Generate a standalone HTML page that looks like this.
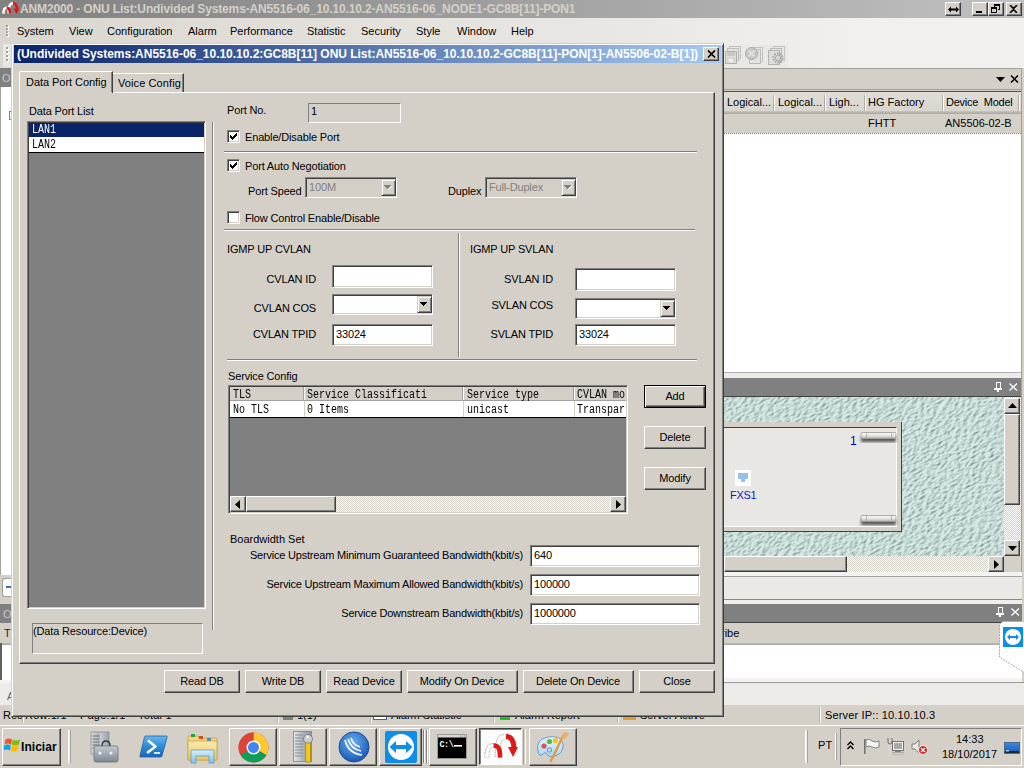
<!DOCTYPE html>
<html><head><meta charset="utf-8"><style>
html,body{margin:0;padding:0;width:1024px;height:768px;overflow:hidden;background:#d4d0c8;}
body>div,body>svg{position:absolute;box-sizing:border-box;}
body{font-family:"Liberation Sans",sans-serif;}
</style></head><body>
<div style="left:0px;top:0px;width:1024px;height:18px;background:linear-gradient(to right,#808080,#c0c0c0)"></div>
<svg style="left:2px;top:2px" width="17" height="13" viewBox="0 0 34 26"><path d="M13.5 23V17Q13.5 2.5 22 2.5Q29.5 2.5 30 14" stroke="#fff" stroke-width="5" fill="none"/><path d="M22 2.5Q29.5 2.5 30 14" stroke="#e01818" stroke-width="6" fill="none"/><path d="M23 13L35 13L29 24z" fill="#e01818"/><path d="M3 23.5V21Q3 11.5 9.5 11.5Q16 11.5 16 21V23.5" stroke="#fff" stroke-width="5" fill="none"/><path d="M9.5 11.5Q16 11.5 16 21V23.5" stroke="#d01818" stroke-width="5.5" fill="none"/></svg>
<div style="left:20px;top:2px;font:bold 12px/14px 'Liberation Sans';letter-spacing:-0.14px;color:#d4d0c8;white-space:pre;">ANM2000 - ONU List:Undivided Systems-AN5516-06_10.10.10.2-AN5516-06_NODE1-GC8B[11]-PON1</div>
<div style="left:945px;top:2px;width:16px;height:14px;background:#d4d0c8;border:1px solid;border-color:#ffffff #404040 #404040 #ffffff;box-shadow:inset -1px -1px #808080;"></div>
<div style="left:972px;top:2px;width:16px;height:14px;background:#d4d0c8;border:1px solid;border-color:#ffffff #404040 #404040 #ffffff;box-shadow:inset -1px -1px #808080;"></div>
<div style="left:988px;top:2px;width:16px;height:14px;background:#d4d0c8;border:1px solid;border-color:#ffffff #404040 #404040 #ffffff;box-shadow:inset -1px -1px #808080;"></div>
<div style="left:1006px;top:2px;width:16px;height:14px;background:#d4d0c8;border:1px solid;border-color:#ffffff #404040 #404040 #ffffff;box-shadow:inset -1px -1px #808080;"></div>
<svg style="left:948px;top:6px" width="11" height="7"><path d="M0 3.5L3 0.5V2.5H8V0.5L11 3.5L8 6.5V4.5H3V6.5z" fill="#000"/></svg>
<div style="left:976px;top:11px;width:6px;height:2px;background:#000"></div>
<svg style="left:991px;top:4px" width="10" height="10" shape-rendering="crispEdges"><path d="M3 0h6v6h-2v-1h1v-3h-4v1h-1z M0 3h6v6h-6z M1 5h4v3h-4z" fill="#000" fill-rule="evenodd"/></svg>
<svg style="left:1009px;top:5px" width="9" height="8"><path d="M1 0L4.5 3.5L8 0M1 8L4.5 4.5L8 8" stroke="#000" stroke-width="1.6" fill="none"/></svg>
<div style="left:0px;top:18px;width:1024px;height:50px;background:linear-gradient(to right,#d9d6cf 0px,#e1ded9 250px,#e9e7e3 600px,#f1f0ee 860px,#f2f1ef 1024px)"></div>
<div style="left:7px;top:26px;width:2px;height:2px;background:#fff"></div>
<div style="left:6px;top:25px;width:2px;height:2px;background:#a0a0a0"></div>
<div style="left:7px;top:29px;width:2px;height:2px;background:#fff"></div>
<div style="left:6px;top:28px;width:2px;height:2px;background:#a0a0a0"></div>
<div style="left:7px;top:32px;width:2px;height:2px;background:#fff"></div>
<div style="left:6px;top:31px;width:2px;height:2px;background:#a0a0a0"></div>
<div style="left:7px;top:35px;width:2px;height:2px;background:#fff"></div>
<div style="left:6px;top:34px;width:2px;height:2px;background:#a0a0a0"></div>
<div style="left:17px;top:25px;font:normal 11px/13px 'Liberation Sans';letter-spacing:0px;color:#000;white-space:pre;">System</div>
<div style="left:69px;top:25px;font:normal 11px/13px 'Liberation Sans';letter-spacing:0px;color:#000;white-space:pre;">View</div>
<div style="left:107px;top:25px;font:normal 11px/13px 'Liberation Sans';letter-spacing:0px;color:#000;white-space:pre;">Configuration</div>
<div style="left:188px;top:25px;font:normal 11px/13px 'Liberation Sans';letter-spacing:0px;color:#000;white-space:pre;">Alarm</div>
<div style="left:230px;top:25px;font:normal 11px/13px 'Liberation Sans';letter-spacing:0px;color:#000;white-space:pre;">Performance</div>
<div style="left:307px;top:25px;font:normal 11px/13px 'Liberation Sans';letter-spacing:0px;color:#000;white-space:pre;">Statistic</div>
<div style="left:361px;top:25px;font:normal 11px/13px 'Liberation Sans';letter-spacing:0px;color:#000;white-space:pre;">Security</div>
<div style="left:416px;top:25px;font:normal 11px/13px 'Liberation Sans';letter-spacing:0px;color:#000;white-space:pre;">Style</div>
<div style="left:457px;top:25px;font:normal 11px/13px 'Liberation Sans';letter-spacing:0px;color:#000;white-space:pre;">Window</div>
<div style="left:511px;top:25px;font:normal 11px/13px 'Liberation Sans';letter-spacing:0px;color:#000;white-space:pre;">Help</div>
<div style="left:3px;top:44px;width:9px;height:23px;background:#e9e7e3"></div>
<div style="left:7px;top:48px;width:2px;height:2px;background:#fff"></div>
<div style="left:6px;top:47px;width:2px;height:2px;background:#a0a0a0"></div>
<div style="left:7px;top:52px;width:2px;height:2px;background:#fff"></div>
<div style="left:6px;top:51px;width:2px;height:2px;background:#a0a0a0"></div>
<div style="left:7px;top:56px;width:2px;height:2px;background:#fff"></div>
<div style="left:6px;top:55px;width:2px;height:2px;background:#a0a0a0"></div>
<div style="left:7px;top:60px;width:2px;height:2px;background:#fff"></div>
<div style="left:6px;top:59px;width:2px;height:2px;background:#a0a0a0"></div>
<div style="left:724px;top:45px;width:64px;height:23px;background:#e9e8e4;border-radius:2px"></div>
<svg style="left:724px;top:46px" width="18" height="19"><rect x="5.5" y="0.5" width="11" height="12" fill="#e6e6e4" stroke="#c0c0be"/><rect x="3.5" y="2.5" width="11" height="12" fill="#e2e2e0" stroke="#bcbcba"/><rect x="1.5" y="5.5" width="11" height="12" fill="#deddd9" stroke="#b0b0ae"/><rect x="3" y="6" width="8" height="4" fill="#c8c8c6"/><rect x="4" y="12" width="6" height="5" fill="#eeeeec" stroke="#b8b8b6" stroke-width="0.6"/></svg>
<svg style="left:745px;top:46px" width="19" height="19"><rect x="6.5" y="1.5" width="11" height="14" fill="#e6e6e4" stroke="#c4c4c2"/><rect x="4.5" y="3.5" width="11" height="14" fill="#e2e2e0" stroke="#bcbcba"/><circle cx="6.5" cy="7.5" r="6" fill="#c8c8c6" stroke="#a8a8a6"/><path d="M3.5 4.5l6 6M9.5 4.5l-6 6" stroke="#e8e8e6" stroke-width="1.4"/></svg>
<svg style="left:767px;top:46px" width="19" height="19"><rect x="6.5" y="0.5" width="11" height="14" fill="#e6e6e4" stroke="#c4c4c2"/><rect x="3.5" y="2.5" width="11" height="14" fill="#e2e2e0" stroke="#bcbcba"/><rect x="1.5" y="4.5" width="11" height="14" fill="#deddd9" stroke="#b4b4b2"/><circle cx="11" cy="12" r="4.5" fill="none" stroke="#a8a8a6" stroke-width="2.2" stroke-dasharray="1.6 1.2"/><circle cx="11" cy="12" r="2.6" fill="#dcdcda" stroke="#a8a8a6"/></svg>
<div style="left:724px;top:68px;width:298px;height:1px;background:#a0a0a0"></div>
<div style="left:724px;top:69px;width:298px;height:21px;background:#d4d0c8"></div>
<svg style="left:996px;top:77px" width="9" height="5"><path d="M0 0h9l-4.5 5z" fill="#000"/></svg>
<svg style="left:1010px;top:75px" width="9" height="8"><path d="M1 0.5L8 7.5M8 0.5L1 7.5" stroke="#000" stroke-width="1.5"/></svg>
<div style="left:1021px;top:68px;width:3px;height:504px;background:#d4d0c8"></div>
<div style="left:1021px;top:68px;width:1px;height:504px;background:#a0a0a0"></div>
<div style="left:724px;top:89px;width:297px;height:1px;background:#a0a0a0"></div>
<div style="left:724px;top:91px;width:297px;height:1px;background:#505050"></div>
<div style="left:724px;top:92px;width:297px;height:21px;background:linear-gradient(#e0ddd6,#d8d5ce)"></div>
<div style="left:724px;top:111px;width:297px;height:3px;background:linear-gradient(#c8c5be,#a8a5a0)"></div>
<div style="left:774px;top:95px;width:1px;height:16px;background:#fff"></div>
<div style="left:773px;top:95px;width:1px;height:16px;background:#b0aca4"></div>
<div style="left:825px;top:95px;width:1px;height:16px;background:#fff"></div>
<div style="left:824px;top:95px;width:1px;height:16px;background:#b0aca4"></div>
<div style="left:865px;top:95px;width:1px;height:16px;background:#fff"></div>
<div style="left:864px;top:95px;width:1px;height:16px;background:#b0aca4"></div>
<div style="left:943px;top:95px;width:1px;height:16px;background:#fff"></div>
<div style="left:942px;top:95px;width:1px;height:16px;background:#b0aca4"></div>
<div style="left:1019px;top:95px;width:1px;height:16px;background:#fff"></div>
<div style="left:1018px;top:95px;width:1px;height:16px;background:#b0aca4"></div>
<div style="left:727px;top:96px;font:normal 11px/13px 'Liberation Sans';letter-spacing:0px;color:#000;white-space:pre;">Logical...</div>
<div style="left:778px;top:96px;font:normal 11px/13px 'Liberation Sans';letter-spacing:0px;color:#000;white-space:pre;">Logical...</div>
<div style="left:829px;top:96px;font:normal 11px/13px 'Liberation Sans';letter-spacing:0px;color:#000;white-space:pre;">Ligh...</div>
<div style="left:868px;top:96px;font:normal 11px/13px 'Liberation Sans';letter-spacing:0px;color:#000;white-space:pre;">HG Factory</div>
<div style="left:946px;top:96px;font:normal 11px/13px 'Liberation Sans';letter-spacing:-0.25px;color:#000;white-space:pre;">Device  Model</div>
<div style="left:724px;top:114px;width:297px;height:19px;background:#d4d0c8"></div>
<div style="left:868px;top:117px;font:normal 11px/13px 'Liberation Sans';letter-spacing:0px;color:#000;white-space:pre;">FHTT</div>
<div style="left:945px;top:117px;font:normal 11px/13px 'Liberation Sans';letter-spacing:0px;color:#000;white-space:pre;">AN5506-02-B</div>
<div style="left:724px;top:133px;width:297px;height:1px;background:repeating-linear-gradient(to right,#808080 0 1px,#fff 1px 2px)"></div>
<div style="left:724px;top:134px;width:297px;height:238px;background:#fff"></div>
<div style="left:724px;top:372px;width:297px;height:1px;background:#b0b0b0"></div>
<div style="left:724px;top:373px;width:297px;height:5px;background:#ecebe7"></div>
<div style="left:724px;top:378px;width:297px;height:19px;background:#808080;border-bottom:1px solid #404040"></div>
<svg style="left:994px;top:382px" width="8" height="10" shape-rendering="crispEdges"><path d="M2 0h4v6h-4z M0 6h8v1h-8z M3.5 7h1v3h-1z" fill="none" stroke="#fff" stroke-width="1"/></svg>
<svg style="left:1009px;top:383px" width="9" height="8"><path d="M0.5 0.5L8 7.5M8 0.5L0.5 7.5" stroke="#fff" stroke-width="1.3"/></svg>
<svg style="left:724px;top:397px" width="280" height="159"><defs><filter id="tx" x="0" y="0" width="100%" height="100%" color-interpolation-filters="sRGB"><feTurbulence type="fractalNoise" baseFrequency="0.2 0.5" numOctaves="3" seed="11" result="n"/><feDiffuseLighting in="n" surfaceScale="1.3" diffuseConstant="1.32" lighting-color="#e6fbf6" result="l"><feDistantLight azimuth="235" elevation="45"/></feDiffuseLighting></filter></defs><rect width="280" height="159" fill="#accbc5"/><g transform="rotate(-28 140 80)"><rect x="-100" y="-120" width="480" height="400" filter="url(#tx)" opacity="0.6"/></g></svg>
<div style="left:724px;top:422px;width:178px;height:110px;background:#d4d0c8;border-right:1px solid #404040;border-bottom:1px solid #404040"></div>
<div style="left:724px;top:427px;width:173px;height:100px;background:#e9e7e3;border-top:1px solid #404040;border-right:1px solid #fff;border-bottom:1px solid #fff"></div>
<div style="left:850px;top:434px;font:normal 12px/14px 'Liberation Sans';letter-spacing:0px;color:#0000b8;white-space:pre;">1</div>
<svg style="left:858px;top:431px" width="42" height="16"><defs><linearGradient id="cg432" x1="0" y1="0" x2="0" y2="1"><stop offset="0" stop-color="#f8f8f6"/><stop offset="0.5" stop-color="#e6e6e4"/><stop offset="1" stop-color="#b0b0ac"/></linearGradient><filter id="cb432"><feGaussianBlur stdDeviation="1.6"/></filter></defs><rect x="3" y="6" width="35" height="5" fill="#303030" opacity="0.8" filter="url(#cb432)"/><rect x="3" y="1.5" width="35" height="6" rx="1" fill="url(#cg432)" stroke="#9a9a98" stroke-width="0.8"/><path d="M8.5 2v5M33.5 2v5" stroke="#a8a8a4" stroke-width="0.8"/></svg>
<svg style="left:858px;top:514px" width="42" height="16"><defs><linearGradient id="cg515" x1="0" y1="0" x2="0" y2="1"><stop offset="0" stop-color="#f8f8f6"/><stop offset="0.5" stop-color="#e6e6e4"/><stop offset="1" stop-color="#b0b0ac"/></linearGradient><filter id="cb515"><feGaussianBlur stdDeviation="1.6"/></filter></defs><rect x="3" y="6" width="35" height="5" fill="#303030" opacity="0.8" filter="url(#cb515)"/><rect x="3" y="1.5" width="35" height="6" rx="1" fill="url(#cg515)" stroke="#9a9a98" stroke-width="0.8"/><path d="M8.5 2v5M33.5 2v5" stroke="#a8a8a4" stroke-width="0.8"/></svg>
<div style="left:735px;top:470px;width:16px;height:16px;background:#fff"></div>
<svg style="left:737px;top:472px" width="12" height="12"><path d="M1 1h10v6h-3v3h-4v-3h-3z" fill="#94c0ec"/></svg>
<div style="left:730px;top:489px;font:normal 11px/13px 'Liberation Sans';letter-spacing:-0.3px;color:#1020c0;white-space:pre;">FXS1</div>
<div style="left:1004px;top:397px;width:17px;height:175px;background:repeating-conic-gradient(#fff 0 25%,#d4d0c8 0 50%) 0 0/2px 2px"></div>
<div style="left:1004px;top:398px;width:16px;height:16px;background:#d4d0c8;border:1px solid;border-color:#ffffff #404040 #404040 #ffffff;box-shadow:inset -1px -1px #808080;"></div>
<svg style="left:1008px;top:403px" width="9" height="5"><path d="M4.5 0L9 5H0z" fill="#000"/></svg>
<div style="left:1004px;top:414px;width:16px;height:91px;background:#d4d0c8;border:1px solid;border-color:#ffffff #404040 #404040 #ffffff;box-shadow:inset -1px -1px #808080;"></div>
<div style="left:1004px;top:540px;width:16px;height:16px;background:#d4d0c8;border:1px solid;border-color:#ffffff #404040 #404040 #ffffff;box-shadow:inset -1px -1px #808080;"></div>
<svg style="left:1008px;top:546px" width="9" height="5"><path d="M0 0h9L4.5 5z" fill="#000"/></svg>
<div style="left:724px;top:556px;width:280px;height:16px;background:repeating-conic-gradient(#fff 0 25%,#d4d0c8 0 50%) 0 0/2px 2px"></div>
<div style="left:724px;top:556px;width:123px;height:16px;background:#d4d0c8;border:1px solid;border-color:#ffffff #404040 #404040 #ffffff;box-shadow:inset -1px -1px #808080;"></div>
<div style="left:988px;top:556px;width:16px;height:16px;background:#d4d0c8;border:1px solid;border-color:#ffffff #404040 #404040 #ffffff;box-shadow:inset -1px -1px #808080;"></div>
<svg style="left:994px;top:560px" width="5" height="9"><path d="M0 0L5 4.5L0 9z" fill="#000"/></svg>
<div style="left:1004px;top:556px;width:17px;height:16px;background:#d4d0c8"></div>
<div style="left:724px;top:572px;width:298px;height:4px;background:#f4f3f1"></div>
<div style="left:724px;top:576px;width:298px;height:1px;background:#a0a0a0"></div>
<div style="left:724px;top:577px;width:298px;height:22px;background:#ebe9e5"></div>
<div style="left:724px;top:599px;width:298px;height:1px;background:#8a8a8a"></div>
<div style="left:724px;top:600px;width:298px;height:4px;background:#f0efec"></div>
<div style="left:724px;top:604px;width:298px;height:19px;background:#808080;border-bottom:1px solid #404040"></div>
<svg style="left:996px;top:607px" width="8" height="10" shape-rendering="crispEdges"><path d="M2 0h4v6h-4z M0 6h8v1h-8z M3.5 7h1v3h-1z" fill="none" stroke="#fff" stroke-width="1"/></svg>
<svg style="left:1011px;top:608px" width="9" height="8"><path d="M0.5 0.5L8 7.5M8 0.5L0.5 7.5" stroke="#fff" stroke-width="1.3"/></svg>
<div style="left:724px;top:623px;width:298px;height:20px;background:#d4d0c8"></div>
<div style="left:724px;top:643px;width:298px;height:2px;background:linear-gradient(#c0bdb6,#a8a5a0)"></div>
<div style="left:721px;top:627px;font:normal 11px/13px 'Liberation Sans';letter-spacing:0px;color:#000;white-space:pre;">ribe</div>
<div style="left:724px;top:645px;width:298px;height:33px;background:#fff"></div>
<div style="left:724px;top:678px;width:298px;height:4px;background:#f4f3f1"></div>
<div style="left:724px;top:682px;width:300px;height:1px;background:#9a9a9a"></div>
<div style="left:724px;top:683px;width:300px;height:22px;background:#ecebe7"></div>
<svg style="left:999px;top:621px" width="25" height="54"><path d="M26 0.5H6Q0.5 0.5 0.5 6V36L26 52z" fill="#fff" stroke="#a8a8a8" stroke-width="1" stroke-dasharray="2 1"/><rect x="4" y="6" width="20" height="20" fill="#0e8ee9"/><circle cx="14" cy="16" r="8" fill="#fff"/><path d="M8 16l3-3v2h6v-2l3 3-3 3v-2h-6v2z" fill="#0e8ee9"/></svg>
<div style="left:0px;top:68px;width:11px;height:19px;background:#808080"></div>
<div style="left:2px;top:72px;font:normal 11px/13px 'Liberation Sans';letter-spacing:0px;color:#c8c8c8;white-space:pre;">O</div>
<div style="left:0px;top:87px;width:11px;height:488px;background:#fff"></div>
<div style="left:0px;top:87px;width:1px;height:488px;background:#a0a0a0"></div>
<div style="left:9px;top:111px;width:2px;height:9px;border:1px solid #808080;border-right:none"></div>
<div style="left:0px;top:575px;width:11px;height:29px;background:#d4d0c8"></div>
<div style="left:2px;top:578px;width:9px;height:19px;background:#fff;border:1px solid #a0a0a0;border-right:none;border-radius:3px 0 0 3px"></div>
<div style="left:6px;top:586px;width:5px;height:2px;background:#4070b0"></div>
<div style="left:0px;top:604px;width:11px;height:19px;background:#808080"></div>
<div style="left:3px;top:608px;font:normal 11px/13px 'Liberation Sans';letter-spacing:0px;color:#c8c8c8;white-space:pre;">O</div>
<div style="left:0px;top:623px;width:11px;height:20px;background:#d4d0c8"></div>
<div style="left:4px;top:627px;font:normal 11px/13px 'Liberation Sans';letter-spacing:0px;color:#402000;white-space:pre;">T</div>
<div style="left:0px;top:643px;width:11px;height:2px;background:linear-gradient(#c0bdb6,#a8a5a0)"></div>
<div style="left:0px;top:645px;width:11px;height:35px;background:#fff"></div>
<div style="left:0px;top:643px;width:2px;height:37px;background:#606060"></div>
<div style="left:0px;top:680px;width:11px;height:3px;background:#f4f3f1"></div>
<div style="left:0px;top:683px;width:11px;height:22px;background:#ecebe7"></div>
<div style="left:7px;top:690px;font:normal 11px/13px 'Liberation Sans';letter-spacing:0px;color:#606060;white-space:pre;">A</div>
<div style="left:0px;top:705px;width:1024px;height:20px;background:#d4d0c8"></div>
<div style="left:3px;top:709px;font:normal 11px/13px 'Liberation Sans';letter-spacing:0px;color:#000;white-space:pre;">Rec</div>
<div style="left:25px;top:709px;font:normal 11px/13px 'Liberation Sans';letter-spacing:0.2px;color:#000;white-space:pre;">Row:1/1</div>
<div style="left:80px;top:709px;font:normal 11px/13px 'Liberation Sans';letter-spacing:0.2px;color:#000;white-space:pre;">Page:1/1</div>
<div style="left:138px;top:709px;font:normal 11px/13px 'Liberation Sans';letter-spacing:0.2px;color:#000;white-space:pre;">Total 1</div>
<div style="left:22px;top:707px;width:1px;height:16px;background:#b8b4ac"></div>
<div style="left:23px;top:707px;width:1px;height:16px;background:#fff"></div>
<div style="left:277px;top:707px;width:1px;height:16px;background:#b8b4ac"></div>
<div style="left:278px;top:707px;width:1px;height:16px;background:#fff"></div>
<div style="left:370px;top:707px;width:1px;height:16px;background:#b8b4ac"></div>
<div style="left:371px;top:707px;width:1px;height:16px;background:#fff"></div>
<div style="left:493px;top:707px;width:1px;height:16px;background:#b8b4ac"></div>
<div style="left:494px;top:707px;width:1px;height:16px;background:#fff"></div>
<div style="left:617px;top:707px;width:1px;height:16px;background:#b8b4ac"></div>
<div style="left:618px;top:707px;width:1px;height:16px;background:#fff"></div>
<div style="left:819px;top:707px;width:1px;height:16px;background:#b8b4ac"></div>
<div style="left:820px;top:707px;width:1px;height:16px;background:#fff"></div>
<div style="left:297px;top:709px;font:normal 11px/13px 'Liberation Sans';letter-spacing:0px;color:#000;white-space:pre;">1(1)</div>
<div style="left:283px;top:710px;width:10px;height:10px;background:#808080"></div>
<div style="left:391px;top:709px;font:normal 11px/13px 'Liberation Sans';letter-spacing:0px;color:#000;white-space:pre;">Alarm Statistic</div>
<div style="left:373px;top:710px;width:14px;height:10px;background:#fff;border:1px solid #3060c0"></div>
<div style="left:515px;top:709px;font:normal 11px/13px 'Liberation Sans';letter-spacing:0px;color:#000;white-space:pre;">Alarm Report</div>
<div style="left:500px;top:712px;width:10px;height:8px;background:#20c020"></div>
<div style="left:640px;top:709px;font:normal 11px/13px 'Liberation Sans';letter-spacing:0px;color:#000;white-space:pre;">Server Active</div>
<div style="left:623px;top:711px;width:13px;height:9px;background:#e0a030"></div>
<div style="left:825px;top:709px;font:normal 11px/13px 'Liberation Sans';letter-spacing:0.15px;color:#000;white-space:pre;">Server IP:: 10.10.10.3</div>
<div style="left:11px;top:43px;width:713px;height:674px;background:#d4d0c8;border:1px solid;border-color:#d4d0c8 #404040 #404040 #d4d0c8;box-shadow:inset 1px 1px #ffffff,inset -1px -1px #808080"></div>
<div style="left:14px;top:45px;width:707px;height:18px;background:linear-gradient(to right,#0a246a,#a6caf0)"></div>
<div style="left:17px;top:47px;font:bold 12px/14px 'Liberation Sans';letter-spacing:-0.03px;color:#fff;white-space:pre;">(Undivided Systems:AN5516-06_10.10.10.2:GC8B[11] ONU List:AN5516-06_10.10.10.2-GC8B[11]-PON[1]-AN5506-02-B[1])</div>
<div style="left:703px;top:47px;width:16px;height:14px;background:#d4d0c8;border:1px solid;border-color:#ffffff #404040 #404040 #ffffff;box-shadow:inset -1px -1px #808080;"></div>
<svg style="left:707px;top:50px" width="9" height="8"><path d="M1 0.5L8 7.5M8 0.5L1 7.5" stroke="#000" stroke-width="1.7"/></svg>
<div style="left:19px;top:92px;width:696px;height:572px;border:1px solid;border-color:#ffffff #404040 #404040 #ffffff;box-shadow:inset -1px -1px #808080"></div>
<div style="left:113px;top:73px;width:71px;height:19px;background:#d4d0c8;border-top:1px solid #ffffff;border-right:1px solid #404040;box-shadow:inset -1px 0 #808080"></div>
<div style="left:118px;top:77px;font:normal 11px/13px 'Liberation Sans';letter-spacing:0.1px;color:#000;white-space:pre;">Voice Config</div>
<div style="left:19px;top:71px;width:94px;height:22px;background:#d4d0c8;border-top:1px solid #ffffff;border-left:1px solid #ffffff;border-right:1px solid #404040;box-shadow:inset -1px 0 #808080;border-top-left-radius:2px"></div>
<div style="left:20px;top:92px;width:92px;height:2px;background:#d4d0c8"></div>
<div style="left:26px;top:76px;font:normal 11px/13px 'Liberation Sans';letter-spacing:-0.05px;color:#000;white-space:pre;">Data Port Config</div>
<div style="left:29px;top:105px;font:normal 11px/13px 'Liberation Sans';letter-spacing:-0.15px;color:#000;white-space:pre;">Data Port List</div>
<div style="left:27px;top:121px;width:179px;height:488px;background:#808080;border:1px solid;border-color:#808080 #ffffff #ffffff #808080;box-shadow:inset 1px 1px #404040,inset -1px -1px #d4d0c8;"></div>
<div style="left:29px;top:123px;width:175px;height:14px;background:#0a246a"></div>
<div style="left:32px;top:123px;font:normal 12px/14px 'Liberation Mono';letter-spacing:0px;color:#fff;white-space:pre;transform:scaleX(0.833);transform-origin:0 0">LAN1</div>
<div style="left:29px;top:137px;width:175px;height:16px;background:#fff;border-bottom:1px solid #000"></div>
<div style="left:32px;top:138px;font:normal 12px/14px 'Liberation Mono';letter-spacing:0px;color:#000;white-space:pre;transform:scaleX(0.833);transform-origin:0 0">LAN2</div>
<div style="left:212px;top:122px;width:1px;height:508px;background:#808080"></div>
<div style="left:213px;top:122px;width:1px;height:508px;background:#ffffff"></div>
<div style="left:32px;top:623px;width:171px;height:31px;background:#d4d0c8;border:1px solid;border-color:#808080 #ffffff #ffffff #808080"></div>
<div style="left:33px;top:625px;font:normal 11px/13px 'Liberation Sans';letter-spacing:-0.15px;color:#000;white-space:pre;">(Data Resource:Device)</div>
<div style="left:227px;top:104px;font:normal 11px/13px 'Liberation Sans';letter-spacing:-0.15px;color:#000;white-space:pre;">Port No.</div>
<div style="left:308px;top:103px;width:93px;height:20px;background:#d4d0c8;border:1px solid;border-color:#808080 #ffffff #ffffff #808080"></div>
<div style="left:311px;top:105px;font:normal 11px/13px 'Liberation Sans';letter-spacing:-0.15px;color:#000;white-space:pre;">1</div>
<div style="left:227px;top:130px;width:13px;height:13px;background:#fff;border:1px solid;border-color:#808080 #ffffff #ffffff #808080;box-shadow:inset 1px 1px #404040,inset -1px -1px #d4d0c8;"></div>
<svg style="left:230px;top:133px" width="7" height="7" viewBox="0 0 7 7"><path d="M0 2h1v1h1v1h1v-1h1v-1h1v-1h1v-1h1v3h-1v1h-1v1h-1v1h-1v1h-1v-1h-1v-1h-1v-1h-1z" fill="#000"/></svg>
<div style="left:245px;top:131px;font:normal 11px/13px 'Liberation Sans';letter-spacing:-0.15px;color:#000;white-space:pre;">Enable/Disable Port</div>
<div style="left:224px;top:151px;width:473px;height:1px;background:#808080"></div>
<div style="left:224px;top:152px;width:473px;height:1px;background:#ffffff"></div>
<div style="left:227px;top:159px;width:13px;height:13px;background:#fff;border:1px solid;border-color:#808080 #ffffff #ffffff #808080;box-shadow:inset 1px 1px #404040,inset -1px -1px #d4d0c8;"></div>
<svg style="left:230px;top:162px" width="7" height="7" viewBox="0 0 7 7"><path d="M0 2h1v1h1v1h1v-1h1v-1h1v-1h1v-1h1v3h-1v1h-1v1h-1v1h-1v1h-1v-1h-1v-1h-1v-1h-1z" fill="#000"/></svg>
<div style="left:245px;top:160px;font:normal 11px/13px 'Liberation Sans';letter-spacing:-0.15px;color:#000;white-space:pre;">Port Auto Negotiation</div>
<div style="left:248px;top:185px;font:normal 11px/13px 'Liberation Sans';letter-spacing:-0.15px;color:#000;white-space:pre;">Port Speed</div>
<div style="left:305px;top:177px;width:92px;height:21px;background:#d4d0c8;border:1px solid;border-color:#808080 #ffffff #ffffff #808080;box-shadow:inset 1px 1px #404040,inset -1px -1px #d4d0c8;"></div>
<div style="left:381px;top:179px;width:15px;height:17px;background:#d4d0c8;border:1px solid;border-color:#d4d0c8 #404040 #404040 #d4d0c8;box-shadow:inset 1px 1px #ffffff,inset -1px -1px #808080"></div>
<svg style="left:384px;top:185px" width="9" height="6" shape-rendering="crispEdges"><path d="M0 0h7v1h-1v1h-1v1h-1v1h-1v-1h-1v-1h-1v-1h-1z" fill="#808080"/><path d="M4 4h1v-1h1v-1h1v-1h1v1h-1v1h-1v1h-1v1h-1z" fill="#fff"/></svg>
<div style="left:309px;top:181px;font:normal 11px/13px 'Liberation Sans';letter-spacing:-0.15px;color:#808080;white-space:pre;">100M</div>
<div style="left:448px;top:185px;font:normal 11px/13px 'Liberation Sans';letter-spacing:-0.15px;color:#000;white-space:pre;">Duplex</div>
<div style="left:485px;top:177px;width:92px;height:21px;background:#d4d0c8;border:1px solid;border-color:#808080 #ffffff #ffffff #808080;box-shadow:inset 1px 1px #404040,inset -1px -1px #d4d0c8;"></div>
<div style="left:561px;top:179px;width:15px;height:17px;background:#d4d0c8;border:1px solid;border-color:#d4d0c8 #404040 #404040 #d4d0c8;box-shadow:inset 1px 1px #ffffff,inset -1px -1px #808080"></div>
<svg style="left:564px;top:185px" width="9" height="6" shape-rendering="crispEdges"><path d="M0 0h7v1h-1v1h-1v1h-1v1h-1v-1h-1v-1h-1v-1h-1z" fill="#808080"/><path d="M4 4h1v-1h1v-1h1v-1h1v1h-1v1h-1v1h-1v1h-1z" fill="#fff"/></svg>
<div style="left:489px;top:181px;font:normal 11px/13px 'Liberation Sans';letter-spacing:-0.15px;color:#808080;white-space:pre;">Full-Duplex</div>
<div style="left:227px;top:211px;width:13px;height:13px;background:#fff;border:1px solid;border-color:#808080 #ffffff #ffffff #808080;box-shadow:inset 1px 1px #404040,inset -1px -1px #d4d0c8;"></div>
<div style="left:245px;top:212px;font:normal 11px/13px 'Liberation Sans';letter-spacing:-0.15px;color:#000;white-space:pre;">Flow Control Enable/Disable</div>
<div style="left:224px;top:229px;width:471px;height:1px;background:#808080"></div>
<div style="left:224px;top:230px;width:471px;height:1px;background:#ffffff"></div>
<div style="left:227px;top:243px;font:normal 11px/13px 'Liberation Sans';letter-spacing:-0.15px;color:#000;white-space:pre;">IGMP UP CVLAN</div>
<div style="left:458px;top:233px;width:1px;height:124px;background:#808080"></div>
<div style="left:459px;top:233px;width:1px;height:124px;background:#ffffff"></div>
<div style="left:470px;top:243px;font:normal 11px/13px 'Liberation Sans';letter-spacing:-0.15px;color:#000;white-space:pre;">IGMP UP SVLAN</div>
<div style="right:708px;top:273px;font:normal 11px/13px 'Liberation Sans';letter-spacing:-0.15px;color:#000;white-space:pre;">CVLAN ID</div>
<div style="left:332px;top:265px;width:101px;height:23px;background:#fff;border:1px solid;border-color:#808080 #ffffff #ffffff #808080;box-shadow:inset 1px 1px #404040,inset -1px -1px #d4d0c8;"></div>
<div style="right:708px;top:302px;font:normal 11px/13px 'Liberation Sans';letter-spacing:-0.15px;color:#000;white-space:pre;">CVLAN COS</div>
<div style="left:332px;top:294px;width:101px;height:21px;background:#fff;border:1px solid;border-color:#808080 #ffffff #ffffff #808080;box-shadow:inset 1px 1px #404040,inset -1px -1px #d4d0c8;"></div>
<div style="left:417px;top:296px;width:15px;height:17px;background:#d4d0c8;border:1px solid;border-color:#d4d0c8 #404040 #404040 #d4d0c8;box-shadow:inset 1px 1px #ffffff,inset -1px -1px #808080"></div>
<svg style="left:420px;top:302px" width="8" height="5" shape-rendering="crispEdges"><path d="M0 0h7v1h-1v1h-1v1h-1v1h-1v-1h-1v-1h-1v-1h-1z" fill="#000"/></svg>
<div style="right:708px;top:328px;font:normal 11px/13px 'Liberation Sans';letter-spacing:-0.15px;color:#000;white-space:pre;">CVLAN TPID</div>
<div style="left:332px;top:324px;width:101px;height:22px;background:#fff;border:1px solid;border-color:#808080 #ffffff #ffffff #808080;box-shadow:inset 1px 1px #404040,inset -1px -1px #d4d0c8;"></div>
<div style="left:336px;top:328px;font:normal 11px/13px 'Liberation Sans';letter-spacing:-0.15px;color:#000;white-space:pre;">33024</div>
<div style="right:471px;top:273px;font:normal 11px/13px 'Liberation Sans';letter-spacing:-0.15px;color:#000;white-space:pre;">SVLAN ID</div>
<div style="left:575px;top:268px;width:101px;height:23px;background:#fff;border:1px solid;border-color:#808080 #ffffff #ffffff #808080;box-shadow:inset 1px 1px #404040,inset -1px -1px #d4d0c8;"></div>
<div style="right:471px;top:299px;font:normal 11px/13px 'Liberation Sans';letter-spacing:-0.15px;color:#000;white-space:pre;">SVLAN COS</div>
<div style="left:575px;top:298px;width:101px;height:21px;background:#fff;border:1px solid;border-color:#808080 #ffffff #ffffff #808080;box-shadow:inset 1px 1px #404040,inset -1px -1px #d4d0c8;"></div>
<div style="left:660px;top:300px;width:15px;height:17px;background:#d4d0c8;border:1px solid;border-color:#d4d0c8 #404040 #404040 #d4d0c8;box-shadow:inset 1px 1px #ffffff,inset -1px -1px #808080"></div>
<svg style="left:663px;top:306px" width="8" height="5" shape-rendering="crispEdges"><path d="M0 0h7v1h-1v1h-1v1h-1v1h-1v-1h-1v-1h-1v-1h-1z" fill="#000"/></svg>
<div style="right:471px;top:328px;font:normal 11px/13px 'Liberation Sans';letter-spacing:-0.15px;color:#000;white-space:pre;">SVLAN TPID</div>
<div style="left:575px;top:324px;width:101px;height:22px;background:#fff;border:1px solid;border-color:#808080 #ffffff #ffffff #808080;box-shadow:inset 1px 1px #404040,inset -1px -1px #d4d0c8;"></div>
<div style="left:579px;top:328px;font:normal 11px/13px 'Liberation Sans';letter-spacing:-0.15px;color:#000;white-space:pre;">33024</div>
<div style="left:227px;top:359px;width:470px;height:1px;background:#808080"></div>
<div style="left:227px;top:360px;width:470px;height:1px;background:#ffffff"></div>
<div style="left:228px;top:370px;font:normal 11px/13px 'Liberation Sans';letter-spacing:-0.15px;color:#000;white-space:pre;">Service Config</div>
<div style="left:228px;top:385px;width:400px;height:129px;background:#808080;border:1px solid;border-color:#808080 #ffffff #ffffff #808080;box-shadow:inset 1px 1px #404040,inset -1px -1px #d4d0c8;"></div>
<div style="left:230px;top:387px;width:396px;height:14px;background:#d4d0c8"></div>
<div style="left:230px;top:401px;width:396px;height:17px;background:#fff;border-bottom:1px solid #000"></div>
<div style="left:304px;top:387px;width:1px;height:14px;background:#fff"></div>
<div style="left:303px;top:387px;width:1px;height:14px;background:#a0a0a0"></div>
<div style="left:304px;top:401px;width:1px;height:16px;background:#d4d0c8"></div>
<div style="left:463px;top:387px;width:1px;height:14px;background:#fff"></div>
<div style="left:462px;top:387px;width:1px;height:14px;background:#a0a0a0"></div>
<div style="left:463px;top:401px;width:1px;height:16px;background:#d4d0c8"></div>
<div style="left:574px;top:387px;width:1px;height:14px;background:#fff"></div>
<div style="left:573px;top:387px;width:1px;height:14px;background:#a0a0a0"></div>
<div style="left:574px;top:401px;width:1px;height:16px;background:#d4d0c8"></div>
<div style="left:230px;top:400px;width:396px;height:1px;background:#a0a0a0"></div>
<div style="left:233px;top:388px;font:normal 12px/14px 'Liberation Mono';letter-spacing:0px;color:#000;white-space:pre;transform:scaleX(0.833);transform-origin:0 0">TLS</div>
<div style="left:307px;top:388px;font:normal 12px/14px 'Liberation Mono';letter-spacing:0px;color:#000;white-space:pre;transform:scaleX(0.833);transform-origin:0 0">Service Classificati</div>
<div style="left:467px;top:388px;font:normal 12px/14px 'Liberation Mono';letter-spacing:0px;color:#000;white-space:pre;transform:scaleX(0.833);transform-origin:0 0">Service type</div>
<div style="left:577px;top:388px;font:normal 12px/14px 'Liberation Mono';letter-spacing:0px;color:#000;white-space:pre;transform:scaleX(0.833);transform-origin:0 0">CVLAN mo</div>
<div style="left:233px;top:403px;font:normal 12px/14px 'Liberation Mono';letter-spacing:0px;color:#000;white-space:pre;transform:scaleX(0.833);transform-origin:0 0">No TLS</div>
<div style="left:307px;top:403px;font:normal 12px/14px 'Liberation Mono';letter-spacing:0px;color:#000;white-space:pre;transform:scaleX(0.833);transform-origin:0 0">0 Items</div>
<div style="left:467px;top:403px;font:normal 12px/14px 'Liberation Mono';letter-spacing:0px;color:#000;white-space:pre;transform:scaleX(0.833);transform-origin:0 0">unicast</div>
<div style="left:577px;top:403px;font:normal 12px/14px 'Liberation Mono';letter-spacing:0px;color:#000;white-space:pre;transform:scaleX(0.833);transform-origin:0 0">Transpar</div>
<div style="left:230px;top:496px;width:396px;height:16px;background:repeating-conic-gradient(#fff 0 25%,#d4d0c8 0 50%) 0 0/2px 2px"></div>
<div style="left:230px;top:496px;width:16px;height:16px;background:#d4d0c8;border:1px solid;border-color:#ffffff #404040 #404040 #ffffff;box-shadow:inset -1px -1px #808080;"></div>
<svg style="left:235px;top:500px" width="5" height="9"><path d="M5 0L0 4.5L5 9z" fill="#000"/></svg>
<div style="left:246px;top:496px;width:90px;height:16px;background:#d4d0c8;border:1px solid;border-color:#ffffff #404040 #404040 #ffffff;box-shadow:inset -1px -1px #808080;"></div>
<div style="left:610px;top:496px;width:16px;height:16px;background:#d4d0c8;border:1px solid;border-color:#ffffff #404040 #404040 #ffffff;box-shadow:inset -1px -1px #808080;"></div>
<svg style="left:616px;top:500px" width="5" height="9"><path d="M0 0L5 4.5L0 9z" fill="#000"/></svg>
<div style="left:644px;top:385px;width:62px;height:23px;background:#d4d0c8;border:1px solid #000;box-shadow:inset 1px 1px #ffffff,inset -1px -1px #404040,inset -2px -2px #808080"></div>
<div style="left:675px;top:390px;font:normal 11px/13px 'Liberation Sans';letter-spacing:-0.15px;color:#000;white-space:pre;transform:translateX(-50%)">Add</div>
<div style="left:644px;top:426px;width:62px;height:23px;background:#d4d0c8;border:1px solid;border-color:#ffffff #404040 #404040 #ffffff;box-shadow:inset -1px -1px #808080;"></div>
<div style="left:675px;top:431px;font:normal 11px/13px 'Liberation Sans';letter-spacing:-0.15px;color:#000;white-space:pre;transform:translateX(-50%)">Delete</div>
<div style="left:644px;top:467px;width:62px;height:23px;background:#d4d0c8;border:1px solid;border-color:#ffffff #404040 #404040 #ffffff;box-shadow:inset -1px -1px #808080;"></div>
<div style="left:675px;top:472px;font:normal 11px/13px 'Liberation Sans';letter-spacing:-0.15px;color:#000;white-space:pre;transform:translateX(-50%)">Modify</div>
<div style="left:230px;top:533px;font:normal 11px/13px 'Liberation Sans';letter-spacing:0px;color:#000;white-space:pre;">Boardwidth Set</div>
<div style="right:501px;top:549px;font:normal 11px/13px 'Liberation Sans';letter-spacing:-0.2px;color:#000;white-space:pre;">Service Upstream Minimum Guaranteed Bandwidth(kbit/s)</div>
<div style="left:530px;top:545px;width:170px;height:22px;background:#fff;border:1px solid;border-color:#808080 #ffffff #ffffff #808080;box-shadow:inset 1px 1px #404040,inset -1px -1px #d4d0c8;"></div>
<div style="left:534px;top:549px;font:normal 11px/13px 'Liberation Sans';letter-spacing:-0.15px;color:#000;white-space:pre;">640</div>
<div style="right:501px;top:578px;font:normal 11px/13px 'Liberation Sans';letter-spacing:-0.2px;color:#000;white-space:pre;">Service Upstream Maximum Allowed Bandwidth(kbit/s)</div>
<div style="left:530px;top:574px;width:170px;height:22px;background:#fff;border:1px solid;border-color:#808080 #ffffff #ffffff #808080;box-shadow:inset 1px 1px #404040,inset -1px -1px #d4d0c8;"></div>
<div style="left:534px;top:578px;font:normal 11px/13px 'Liberation Sans';letter-spacing:-0.15px;color:#000;white-space:pre;">100000</div>
<div style="right:501px;top:607px;font:normal 11px/13px 'Liberation Sans';letter-spacing:-0.2px;color:#000;white-space:pre;">Service Downstream Bandwidth(kbit/s)</div>
<div style="left:530px;top:603px;width:170px;height:22px;background:#fff;border:1px solid;border-color:#808080 #ffffff #ffffff #808080;box-shadow:inset 1px 1px #404040,inset -1px -1px #d4d0c8;"></div>
<div style="left:534px;top:607px;font:normal 11px/13px 'Liberation Sans';letter-spacing:-0.15px;color:#000;white-space:pre;">1000000</div>
<div style="left:164px;top:670px;width:76px;height:23px;background:#d4d0c8;border:1px solid;border-color:#ffffff #404040 #404040 #ffffff;box-shadow:inset -1px -1px #808080;"></div>
<div style="left:202px;top:675px;font:normal 11px/13px 'Liberation Sans';letter-spacing:-0.15px;color:#000;white-space:pre;transform:translateX(-50%)">Read DB</div>
<div style="left:245px;top:670px;width:76px;height:23px;background:#d4d0c8;border:1px solid;border-color:#ffffff #404040 #404040 #ffffff;box-shadow:inset -1px -1px #808080;"></div>
<div style="left:283px;top:675px;font:normal 11px/13px 'Liberation Sans';letter-spacing:-0.15px;color:#000;white-space:pre;transform:translateX(-50%)">Write DB</div>
<div style="left:326px;top:670px;width:76px;height:23px;background:#d4d0c8;border:1px solid;border-color:#ffffff #404040 #404040 #ffffff;box-shadow:inset -1px -1px #808080;"></div>
<div style="left:364px;top:675px;font:normal 11px/13px 'Liberation Sans';letter-spacing:-0.15px;color:#000;white-space:pre;transform:translateX(-50%)">Read Device</div>
<div style="left:407px;top:670px;width:111px;height:23px;background:#d4d0c8;border:1px solid;border-color:#ffffff #404040 #404040 #ffffff;box-shadow:inset -1px -1px #808080;"></div>
<div style="left:462px;top:675px;font:normal 11px/13px 'Liberation Sans';letter-spacing:-0.15px;color:#000;white-space:pre;transform:translateX(-50%)">Modify On Device</div>
<div style="left:523px;top:670px;width:111px;height:23px;background:#d4d0c8;border:1px solid;border-color:#ffffff #404040 #404040 #ffffff;box-shadow:inset -1px -1px #808080;"></div>
<div style="left:578px;top:675px;font:normal 11px/13px 'Liberation Sans';letter-spacing:-0.15px;color:#000;white-space:pre;transform:translateX(-50%)">Delete On Device</div>
<div style="left:639px;top:670px;width:76px;height:23px;background:#d4d0c8;border:1px solid;border-color:#ffffff #404040 #404040 #ffffff;box-shadow:inset -1px -1px #808080;"></div>
<div style="left:677px;top:675px;font:normal 11px/13px 'Liberation Sans';letter-spacing:-0.15px;color:#000;white-space:pre;transform:translateX(-50%)">Close</div>
<div style="left:0px;top:725px;width:1024px;height:1px;background:#fff"></div>
<div style="left:0px;top:726px;width:1024px;height:42px;background:#d4d0c8"></div>
<div style="left:2px;top:728px;width:59px;height:38px;background:#d4d0c8;border:1px solid;border-color:#ffffff #404040 #404040 #ffffff;box-shadow:inset -1px -1px #808080;"></div>
<svg style="left:4px;top:737px" width="17" height="16" viewBox="0 0 17 16"><path d="M1.5 2.5Q4.5 0.5 8 2.5L7 7.5Q3.5 5.5 0.5 7.5z" fill="#f35325"/><path d="M8.8 2.6Q12 4.5 16 2.5L15 7.5Q11.5 9.5 7.8 7.6z" fill="#81bc06"/><path d="M0.3 8.4Q3.5 6.5 6.8 8.4L5.8 13.4Q2.5 11.5 -0.7 13.4z" fill="#05a6f0"/><path d="M7.6 8.5Q11 10.5 14.8 8.5L13.8 13.5Q10 15.5 6.6 13.5z" fill="#ffba08"/></svg>
<div style="left:21px;top:740px;font:bold 12px/14px 'Liberation Sans';letter-spacing:0.05px;color:#000;white-space:pre;">Iniciar</div>
<div style="left:68px;top:730px;width:1px;height:33px;background:#fff"></div>
<div style="left:69px;top:730px;width:1px;height:33px;background:#f0efec"></div>
<div style="left:70px;top:730px;width:1px;height:33px;background:#a0a0a0"></div>
<svg style="left:89px;top:730px" width="31" height="34"><defs><linearGradient id="tw" x1="0" x2="1"><stop offset="0" stop-color="#d8dcdf"/><stop offset="0.45" stop-color="#aeb4b9"/><stop offset="0.5" stop-color="#c8cdd1"/><stop offset="1" stop-color="#9aa1a7"/></linearGradient><linearGradient id="tb" x1="0" y1="0" x2="0" y2="1"><stop offset="0" stop-color="#c4cbd1"/><stop offset="1" stop-color="#7d8891"/></linearGradient></defs><rect x="2" y="2" width="18" height="22" fill="url(#tw)" stroke="#8a9096" stroke-width="0.8"/><path d="M3.5 6h7M3.5 9h7M3.5 12h7M3.5 15h7M3.5 18h7" stroke="#6a7076" stroke-width="1"/><rect x="5" y="16" width="24" height="16" rx="2" fill="url(#tb)" stroke="#68737c" stroke-width="0.8"/><path d="M13 16q0-5 4-5t4 5" stroke="#303840" stroke-width="1.4" fill="none"/><circle cx="11" cy="23" r="1.6" fill="#eef"/><circle cx="22" cy="23" r="1.6" fill="#eef"/></svg>
<svg style="left:139px;top:735px" width="29" height="23"><defs><linearGradient id="ps" x1="0" y1="0" x2="0" y2="1"><stop offset="0" stop-color="#6ab8ec"/><stop offset="0.5" stop-color="#2f8ad6"/><stop offset="1" stop-color="#1a66b8"/></linearGradient></defs><path d="M6.5 1H27.5Q28.5 1 28 2.5L23 21Q22.5 22 21.5 22H1.5Q0.5 22 1 20.5L5.5 2Q6 1 6.5 1z" fill="url(#ps)" stroke="#1d5fa8" stroke-width="0.8"/><path d="M9 5.5l7.5 6-8.5 6.5" stroke="#fff" stroke-width="2.4" fill="none" stroke-linejoin="round"/><path d="M15 18h6" stroke="#e8f4ff" stroke-width="1.8"/></svg>
<svg style="left:187px;top:733px" width="33" height="31"><defs><linearGradient id="fo" x1="0" y1="0" x2="0" y2="1"><stop offset="0" stop-color="#fbeab0"/><stop offset="1" stop-color="#ecc65c"/></linearGradient><linearGradient id="fb" x1="0" y1="0" x2="0" y2="1"><stop offset="0" stop-color="#d8f0fc"/><stop offset="1" stop-color="#7cc0ec"/></linearGradient></defs><path d="M1 3h10l1 2h18v22H1z" fill="#f0d48a" stroke="#c9a24a" stroke-width="0.8"/><rect x="4" y="1" width="4" height="3" fill="#2ca02c"/><rect x="12" y="3" width="4" height="3" fill="#d05020"/><rect x="20" y="5" width="4" height="3" fill="#4090c0"/><path d="M1 8h29v19H1z" fill="url(#fo)" stroke="#c9a24a" stroke-width="0.8"/><path d="M4 17h23v13h-5v-7h-13v7h-5z" fill="url(#fb)" stroke="#5a9ccc" stroke-width="0.8"/></svg>
<div style="left:229px;top:728px;width:48px;height:38px;background:#d4d0c8;border:1px solid;border-color:#ffffff #404040 #404040 #ffffff;box-shadow:inset -1px -1px #808080;"></div>
<div style="left:279px;top:728px;width:48px;height:38px;background:#d4d0c8;border:1px solid;border-color:#ffffff #404040 #404040 #ffffff;box-shadow:inset -1px -1px #808080;"></div>
<div style="left:329px;top:728px;width:48px;height:38px;background:#d4d0c8;border:1px solid;border-color:#ffffff #404040 #404040 #ffffff;box-shadow:inset -1px -1px #808080;"></div>
<div style="left:379px;top:728px;width:43px;height:38px;background:#d4d0c8;border:1px solid;border-color:#ffffff #404040 #404040 #ffffff;box-shadow:inset -1px -1px #808080;"></div>
<div style="left:429px;top:728px;width:48px;height:38px;background:#d4d0c8;border:1px solid;border-color:#ffffff #404040 #404040 #ffffff;box-shadow:inset -1px -1px #808080;"></div>
<div style="left:529px;top:728px;width:48px;height:38px;background:#d4d0c8;border:1px solid;border-color:#ffffff #404040 #404040 #ffffff;box-shadow:inset -1px -1px #808080;"></div>
<div style="left:423px;top:730px;width:1px;height:33px;background:#808080"></div>
<div style="left:424px;top:730px;width:1px;height:33px;background:#fff"></div>
<div style="left:426px;top:730px;width:1px;height:33px;background:#808080"></div>
<div style="left:427px;top:730px;width:1px;height:33px;background:#fff"></div>
<div style="left:479px;top:728px;width:43px;height:37px;background:#fcfcfc;border:1px solid;border-color:#404040 #fff #fff #404040;box-shadow:inset 1px 1px #808080"></div>
<div style="left:523px;top:729px;width:1px;height:35px;background:#a0a0a0"></div>
<div style="left:525px;top:729px;width:1px;height:35px;background:#fff"></div>
<svg style="left:238px;top:732px" width="31" height="31" viewBox="-15.5 -15.5 31 31"><circle r="15" fill="#db4437"/><path d="M0 0L12.99 7.5A15 15 0 0 1 -12.99 7.5z" fill="#0f9d58"/><path d="M0 0L0 -15A15 15 0 0 1 12.99 7.5z" fill="#fcc934"/><path d="M0 -15A15 15 0 0 0 -12.99 7.5L0 0z" fill="#db4437"/><path d="M0 -7H13.5" stroke="#db4437" stroke-width="0"/><circle r="7" fill="#fff"/><circle r="5.5" fill="#4285f4"/></svg>
<svg style="left:292px;top:730px" width="22" height="34"><defs><linearGradient id="st" x1="0" x2="1"><stop offset="0" stop-color="#e4e8ea"/><stop offset="0.55" stop-color="#aab2b8"/><stop offset="1" stop-color="#8c959c"/></linearGradient></defs><rect x="1.5" y="1.5" width="18" height="30" fill="url(#st)" stroke="#7c848a" stroke-width="0.8"/><path d="M3 5h8M3 8h8M3 11h8M3 14h8M3 17h8M3 20h8M3 23h8M3 26h8" stroke="#858d93" stroke-width="1"/><circle cx="16" cy="9" r="4.5" fill="#c8ccd0" stroke="#6c7478" stroke-width="0.8"/><path d="M14.5 5.5l2 2.5" stroke="#fff" stroke-width="1.5"/><rect x="13.5" y="13" width="5" height="19" fill="#f5c518" stroke="#b08800" stroke-width="0.8"/></svg>
<svg style="left:338px;top:731px" width="32" height="32"><defs><radialGradient id="gl" cx="0.45" cy="0.35" r="0.6"><stop offset="0" stop-color="#6ab0f0"/><stop offset="1" stop-color="#1f5fb8"/></radialGradient></defs><circle cx="16" cy="16" r="15" fill="url(#gl)" stroke="#1a4a98" stroke-width="1"/><path d="M7 9q3 13 17 15M10 8q3 10 13 12M13 7q2 7 9 9" stroke="#fff" stroke-width="1.7" fill="none" opacity="0.95"/></svg>
<svg style="left:385px;top:731px" width="32" height="32"><rect width="32" height="32" rx="2" fill="#0e8ee9"/><circle cx="16" cy="16" r="13" fill="#fff"/><path d="M4.5 16l6.5-6v4h10v-4l6.5 6-6.5 6v-4h-10v4z" fill="#0e8ee9"/></svg>
<svg style="left:437px;top:734px" width="30" height="25"><rect x="0.5" y="0.5" width="29" height="24" fill="#000" stroke="#9a9a9a"/><rect x="1" y="1" width="28" height="2.5" fill="#d8d8d8"/><path d="M25 2h1M27 2h1M23 2h1" stroke="#888"/><text x="2.5" y="12.5" font-family="Liberation Mono" font-weight="bold" font-size="8.5" fill="#fff" letter-spacing="-0.5">C:\</text><rect x="17" y="11" width="8" height="1.6" fill="#fff"/></svg>
<svg style="left:484px;top:734px" width="34" height="25"><path d="M13.5 23V17Q13.5 2.5 22 2.5Q29.5 2.5 30 14" stroke="#a0a0a0" stroke-width="5.5" fill="none" stroke-dasharray="1.2 0.8"/><path d="M13.5 23V17Q13.5 2.5 22 2.5Q29.5 2.5 30 14" stroke="#fff" stroke-width="3.8" fill="none"/><path d="M22 2.5Q29.5 2.5 30 14" stroke="#e01818" stroke-width="5" fill="none"/><path d="M24 13L34 13L29 23z" fill="#e01818"/><path d="M3 23.5V21Q3 11.5 9.5 11.5Q16 11.5 16 21V23.5" stroke="#a0a0a0" stroke-width="5" fill="none" stroke-dasharray="1.2 0.8"/><path d="M3 23.5V21Q3 11.5 9.5 11.5Q16 11.5 16 21V23.5" stroke="#fff" stroke-width="3.4" fill="none"/><path d="M9.5 11.5Q16 11.5 16 21V23.5" stroke="#e01818" stroke-width="4.4" fill="none"/></svg>
<svg style="left:535px;top:731px" width="36" height="33"><defs><linearGradient id="pl" x1="0" y1="0" x2="0" y2="1"><stop offset="0" stop-color="#eaf6fd"/><stop offset="1" stop-color="#a8d4f2"/></linearGradient></defs><path d="M3 20Q0 9 13 6Q26 4 28 13Q29 22 20 25Q14 27 12 23Q10 20 7 24Q4 26 3 20z" fill="url(#pl)" stroke="#5a94c4" stroke-width="0.9"/><circle cx="9" cy="15" r="2.6" fill="#e05050"/><circle cx="14.5" cy="10.5" r="2.6" fill="#50c040"/><circle cx="20.5" cy="9.5" r="2.6" fill="#f4c030"/><circle cx="14.5" cy="19" r="2.2" fill="none" stroke="#5a94c4"/><path d="M28 5L16 30" stroke="#e39a3a" stroke-width="2.4" stroke-linecap="round"/><path d="M26 6L29 1Q33 1 34 3L30 8z" fill="#e8b070"/></svg>
<div style="left:805px;top:730px;width:1px;height:33px;background:#fff"></div>
<div style="left:806px;top:730px;width:1px;height:33px;background:#f4f4f2"></div>
<div style="left:807px;top:730px;width:1px;height:33px;background:#a0a0a0"></div>
<div style="left:818px;top:739px;font:normal 11px/13px 'Liberation Sans';letter-spacing:0.2px;color:#000;white-space:pre;">PT</div>
<div style="left:835px;top:733px;width:1px;height:27px;background:#fff"></div>
<div style="left:836px;top:733px;width:1px;height:27px;background:#a0a0a0"></div>
<div style="left:840px;top:728px;width:182px;height:38px;border:1px solid;border-color:#808080 #fff #fff #808080"></div>
<svg style="left:847px;top:741px" width="7" height="9"><path d="M0.5 4L3.5 1L6.5 4M0.5 8L3.5 5L6.5 8" stroke="#000" stroke-width="1.4" fill="none"/></svg>
<svg style="left:863px;top:738px" width="17" height="17"><rect x="1" y="1" width="1.5" height="15" fill="#707070"/><path d="M3 2Q7 0 9 3Q12 5 16 3V9Q12 11 9 9Q6 7 3 9z" fill="#f4f4f4" stroke="#808080"/></svg>
<svg style="left:887px;top:737px" width="18" height="18"><rect x="5.5" y="4.5" width="11" height="9" fill="#f4f4f4" stroke="#707070"/><rect x="7" y="6" width="8" height="6" fill="#a8a8a8"/><rect x="8" y="14" width="6" height="1.5" fill="#808080"/><rect x="6" y="15.5" width="10" height="1.5" fill="#f0f0f0" stroke="#808080" stroke-width="0.5"/><path d="M3 6v11" stroke="#fff" stroke-width="2.2"/><path d="M3 6v11" stroke="#707070" stroke-width="0.6"/><path d="M1 1v4q0 2 2 2t2-2v-4" stroke="#606060" fill="none" stroke-width="0.9"/></svg>
<svg style="left:911px;top:738px" width="17" height="17"><path d="M1 6h3l4-4v13l-4-4h-3z" fill="#e8e8e8" stroke="#808080"/><circle cx="12" cy="12" r="4.5" fill="#e02020" stroke="#fff"/><path d="M10 10l4 4M14 10l-4 4" stroke="#fff" stroke-width="1.3"/></svg>
<div style="left:956px;top:733px;font:normal 11px/13px 'Liberation Sans';letter-spacing:0px;color:#000;white-space:pre;">14:33</div>
<div style="left:942px;top:748px;font:normal 11px/13px 'Liberation Sans';letter-spacing:0px;color:#000;white-space:pre;">18/10/2017</div>
<svg style="left:1004px;top:742px" width="16" height="12"><defs><linearGradient id="sd" x1="0" y1="0" x2="0" y2="1"><stop offset="0" stop-color="#3a8ae0"/><stop offset="1" stop-color="#1a58b0"/></linearGradient></defs><rect x="0.5" y="0.5" width="15" height="11" fill="url(#sd)" stroke="#4a6a90"/><rect x="1" y="9" width="14" height="2" fill="#182838"/><rect x="2" y="8" width="3" height="1.5" fill="#9cf"/></svg>
</body></html>
